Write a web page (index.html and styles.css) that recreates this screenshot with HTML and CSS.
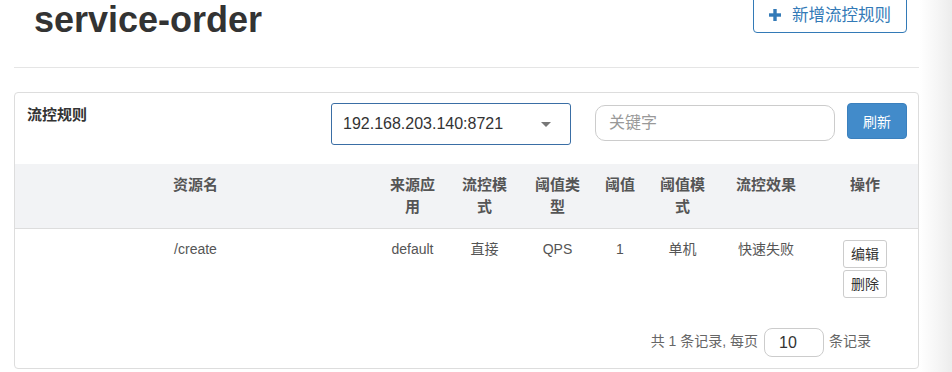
FILE: index.html
```html
<!DOCTYPE html>
<html lang="zh-CN">
<head>
  <meta charset="UTF-8">
  <meta name="viewport" content="width=device-width, initial-scale=1.0">
  <title>流控规则 - service-order</title>
  <link rel="stylesheet" href="styles.css">
</head>
<body>
  <div class="page">
    <div class="page-header">
      <h1>service-order</h1>
      <button class="btn-add" type="button">
        <svg class="icon-plus" width="12" height="12" viewBox="0 0 12 12"><rect x="4.3" y="0" width="3.4" height="12" fill="currentColor"/><rect x="0" y="4.3" width="12" height="3.4" fill="currentColor"/></svg>
        <span>新增流控规则</span>
      </button>
    </div>
    <hr class="divider">

    <div class="panel">
      <div class="panel-head">
        <div class="panel-title">流控规则</div>
        <div class="machine-select">
          <span>192.168.203.140:8721</span>
          <span class="caret"></span>
        </div>
        <input class="search" type="text" placeholder="关键字">
        <button class="btn-refresh" type="button">刷新</button>
      </div>

      <table class="rules">
        <colgroup>
          <col style="width: 361px">
          <col style="width: 73px">
          <col style="width: 71px">
          <col style="width: 75px">
          <col style="width: 50px">
          <col style="width: 75px">
          <col style="width: 92px">
          <col style="width: 106px">
        </colgroup>
        <thead>
          <tr>
            <th>资源名</th>
            <th>来源应用</th>
            <th>流控模式</th>
            <th>阈值类型</th>
            <th>阈值</th>
            <th>阈值模式</th>
            <th>流控效果</th>
            <th>操作</th>
          </tr>
        </thead>
        <tbody>
          <tr>
            <td>/create</td>
            <td>default</td>
            <td>直接</td>
            <td>QPS</td>
            <td>1</td>
            <td>单机</td>
            <td>快速失败</td>
            <td class="actions">
              <button class="btn-small" type="button">编辑</button>
              <button class="btn-small" type="button">删除</button>
            </td>
          </tr>
        </tbody>
      </table>

      <div class="pager">
        <span>共 1 条记录, 每页</span>
        <input class="page-size" type="text" value="10">
        <span>条记录</span>
      </div>
    </div>
  </div>
</body>
</html>
```

FILE: styles.css
```css
html, body {
  margin: 0;
  padding: 0;
}
body {
  font-family: 'Liberation Sans', 'Noto Sans CJK SC', sans-serif;
  font-size: 14px;
  color: #333;
  height: 372px;
  overflow: hidden;
  background: linear-gradient(to right, #fff 0, #fff 920px, #f5f5f5 938px, #ececec 952px);
}
.page {
  margin-left: 14px;
  width: 905px;
}
.page-header {
  display: flex;
  justify-content: space-between;
  align-items: flex-start;
  margin-top: -4px;
  padding-right: 12px;
}
h1 {
  margin: 4px 0 0 20px;
  font-size: 36px;
  line-height: 40px;
  font-weight: bold;
  color: #333;
}
.btn-add {
  display: flex;
  align-items: center;
  gap: 11px;
  width: 154px;
  height: 37px;
  padding: 0 0 0 15px;
  background: #fff;
  border: 1px solid #337ab7;
  border-radius: 4px;
  color: #337ab7;
  font-family: inherit;
  font-size: 16.5px;
  line-height: 20px;
  cursor: pointer;
}
.icon-plus {
  flex: none;
}
.divider {
  margin: 27px 0 0;
  border: none;
  border-top: 1px solid #e5e5e5;
}
.panel {
  margin-top: 24px;
  border: 1px solid #ddd;
  border-radius: 4px;
  background: #fff;
}
.panel-head {
  display: flex;
  align-items: flex-start;
  padding: 10px 11px 19px 12px;
}
.panel-title {
  flex: 1;
  margin-top: 1px;
  font-size: 15px;
  line-height: 22px;
  font-weight: bold;
  color: #333;
}
.machine-select {
  display: flex;
  justify-content: space-between;
  align-items: center;
  box-sizing: border-box;
  width: 240px;
  height: 42px;
  padding: 0 19px 0 11px;
  border: 1px solid #3a6ea5;
  border-radius: 3px;
  font-size: 16px;
  color: #333;
}
.caret {
  width: 0;
  height: 0;
  border-left: 5px solid transparent;
  border-right: 5px solid transparent;
  border-top: 5px solid #777;
}
.search {
  box-sizing: border-box;
  width: 240px;
  height: 36px;
  margin: 2px 0 0 24px;
  padding: 0 13px;
  border: 1px solid #ccc;
  border-radius: 10px;
  font-family: inherit;
  font-size: 16px;
  color: #333;
  outline: none;
}
.search::placeholder {
  color: #999;
}
.btn-refresh {
  width: 60px;
  height: 36px;
  margin-left: 12px;
  padding: 0;
  background: #428bca;
  border: 1px solid #3b80bd;
  border-radius: 4px;
  color: #fff;
  font-family: inherit;
  font-size: 14px;
  cursor: pointer;
}
.rules {
  width: 100%;
  table-layout: fixed;
  border-collapse: collapse;
}
.rules th {
  padding: 10px 8px;
  background: #f2f3f5;
  border-bottom: 1px solid #ddd;
  font-size: 15px;
  line-height: 22px;
  font-weight: bold;
  color: #555;
  text-align: center;
  vertical-align: top;
}
.rules td {
  padding: 9px 8px 10px;
  font-size: 14px;
  line-height: 22px;
  color: #555;
  text-align: center;
  vertical-align: top;
}
.rules td.actions {
  padding-top: 11px;
}
.btn-small {
  display: block;
  margin: 0 auto 2px;
  padding: 3px 7px;
  background: #fff;
  border: 1px solid #ccc;
  border-radius: 3px;
  font-family: inherit;
  font-size: 14px;
  line-height: 20px;
  color: #333;
  cursor: pointer;
}
.pager {
  display: flex;
  justify-content: flex-end;
  align-items: center;
  padding: 18px 47px 11px 0;
  font-size: 14px;
  line-height: 18px;
  color: #666;
}
.pager span {
  margin-top: -3px;
}
.page-size {
  box-sizing: border-box;
  width: 60px;
  height: 29px;
  margin: 0 5px 0 6px;
  padding: 0 0 0 14px;
  border: 1px solid #ccc;
  border-radius: 8px;
  font-family: inherit;
  font-size: 16px;
  color: #333;
  outline: none;
}
```
